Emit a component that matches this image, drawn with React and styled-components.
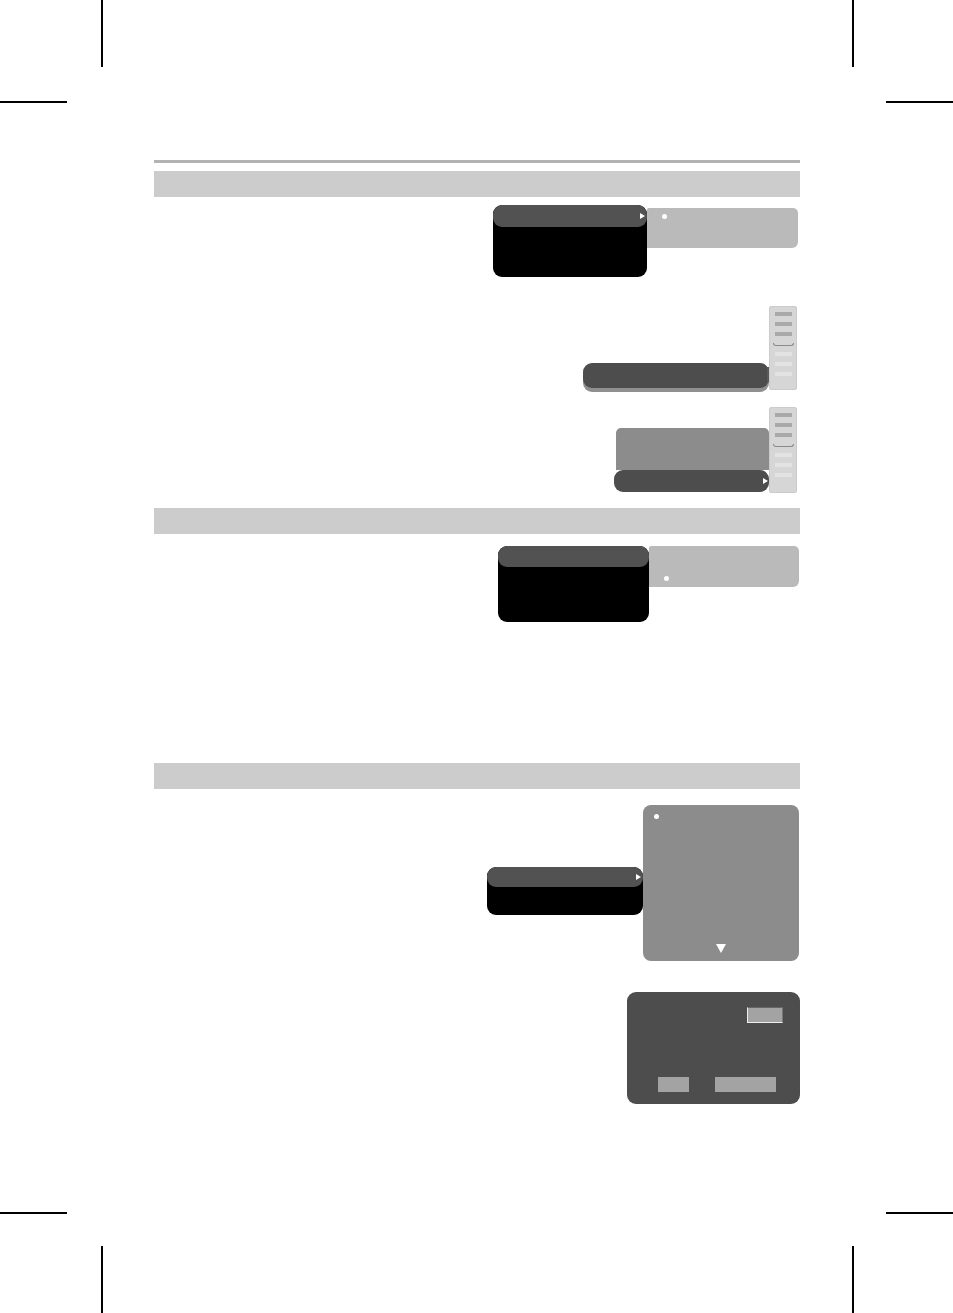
import React from "react";
import styled, { createGlobalStyle } from "styled-components";

// Style
const GlobalStyle = createGlobalStyle`
  html, body {
    margin: 0;
    padding: 0;
    background: #ffffff;
    font-family: "Liberation Sans", Arial, sans-serif;
  }
  * { box-sizing: border-box; }
`;

const Page = styled.div`
  position: relative;
  width: 953px;
  height: 1313px;
  background: #ffffff;
  overflow: hidden;
`;

const CropMark = styled.span`
  position: absolute;
  background: #000000;
  ${({ $vertical }) =>
    $vertical ? `width: 1.5px; height: 67px;` : `width: 67px; height: 1.5px;`}
  ${({ $x }) => `left: ${$x}px;`}
  ${({ $y }) => `top: ${$y}px;`}
`;

const Content = styled.main`
  margin-left: 154px;
  width: 646px;
  padding-top: 160px;
`;

const Rule = styled.div`
  height: 3px;
  background: #b3b3b3;
  margin-bottom: 8px;
`;

const SectionBar = styled.div`
  height: 26px;
  background: #cccccc;
`;

const SectionBody = styled.section`
  height: ${({ $height }) => ($height ? `${$height}px` : "auto")};
  padding-top: ${({ $pad }) => $pad}px;
  display: flex;
  flex-direction: column;
  align-items: flex-end;
`;

const Figure = styled.div`
  display: flex;
  align-items: flex-start;
  margin-top: ${({ $top }) => $top || 0}px;
  margin-right: ${({ $right }) => $right || 0}px;
`;

const Menu = styled.div`
  width: ${({ $w }) => $w}px;
  height: ${({ $h }) => $h}px;
  margin-top: ${({ $top }) => $top || 0}px;
  background: #000000;
  border-radius: 9px;
  overflow: hidden;
`;

const MenuHeader = styled.div`
  height: ${({ $h }) => $h}px;
  background: #525252;
  border-radius: 9px;
  display: flex;
  align-items: center;
  justify-content: flex-end;
  padding-right: 2px;
`;

const Arrow = styled.span`
  width: 0;
  height: 0;
  border-top: 3.5px solid transparent;
  border-bottom: 3.5px solid transparent;
  border-left: 5px solid #ffffff;
`;

const SubMenu = styled.div`
  width: ${({ $w }) => $w}px;
  height: ${({ $h }) => $h}px;
  margin-top: ${({ $top }) => $top || 0}px;
  background: #bababa;
  border-radius: 2px 5px 6px 0;
  display: flex;
  padding-left: 15px;
  padding-top: ${({ $dotTop }) => $dotTop}px;
`;

const Dot = styled.span`
  width: 5px;
  height: 5px;
  border-radius: 50%;
  background: #ffffff;
`;

const Bar = styled.div`
  position: relative;
  width: ${({ $w }) => $w}px;
  height: ${({ $h }) => $h}px;
  margin-top: ${({ $top }) => $top || 0}px;
  background: #4d4d4d;
  border-radius: 9px;
  display: flex;
  align-items: center;
  justify-content: flex-end;
  padding-right: 1px;
  ${({ $shadow }) =>
    $shadow &&
    `
    box-shadow: 0 4px 0 #8f8f8f;
    &::after {
      content: "";
      position: absolute;
      right: -3px;
      top: 4px;
      width: 5px;
      height: 15px;
      background: #5a5a5a;
    }
  `}
`;

const Stack = styled.div`
  display: flex;
  flex-direction: column;
  align-items: flex-end;
  margin-top: ${({ $top }) => $top}px;
`;

const GrayBox = styled.div`
  width: 153px;
  height: 42px;
  background: #8c8c8c;
  border-radius: 5px 5px 0 0;
`;

const Scroll = styled.div`
  position: relative;
  z-index: 1;
  width: 28px;
  height: ${({ $h }) => $h}px;
  background: #d6d6d6;
  border: 1px solid #cbcbcb;
  border-radius: 2px;
  display: flex;
  flex-direction: column;
  align-items: center;
  padding-top: 5px;
  gap: 6px;
`;

const Line = styled.span`
  width: 17px;
  height: 4px;
  background: ${({ $light }) => ($light ? "#e3e3e3" : "#a9a9a9")};
`;

const Arc = styled.span`
  width: 21px;
  height: 3px;
  border: 1px solid #8a8a8a;
  border-top: none;
  border-radius: 0 0 4px 4px;
  margin-top: 1px;
`;

const Panel = styled.div`
  width: 156px;
  height: 156px;
  background: #8c8c8c;
  border-radius: 8px;
  display: flex;
  flex-direction: column;
  justify-content: space-between;
  align-items: flex-start;
  padding: 9px 0 8px 11px;
`;

const DownArrow = styled.span`
  align-self: center;
  margin-left: -11px;
  width: 0;
  height: 0;
  border-left: 5px solid transparent;
  border-right: 5px solid transparent;
  border-top: 9px solid #ffffff;
`;

const Dialog = styled.div`
  width: 173px;
  height: 112px;
  margin-top: ${({ $top }) => $top}px;
  background: #4d4d4d;
  border-radius: 9px;
  display: flex;
  flex-direction: column;
  padding: 15px 17px 0 31px;
`;

const Field = styled.div`
  align-self: flex-end;
  width: 36px;
  height: 16px;
  background: #a3a3a3;
  border-top: 1px solid #666666;
  border-right: 1px solid #777777;
  border-left: 1.5px solid #eeeeee;
  border-bottom: 1.5px solid #eeeeee;
`;

const ButtonRow = styled.div`
  display: flex;
  gap: 26px;
  margin-top: 54px;
`;

const Button = styled.div`
  width: ${({ $w }) => $w}px;
  height: 15px;
  background: #a3a3a3;
`;

const ScrollBar = ({ height }) => (
  <Scroll $h={height}>
    <Line />
    <Line />
    <Line />
    <Arc />
    <Line $light />
    <Line $light />
    <Line $light />
  </Scroll>
);

// React
function App() {
  return (
    <Page>
      <GlobalStyle />
      <CropMark $vertical $x={101} $y={0} />
      <CropMark $x={0} $y={101} />
      <CropMark $vertical $x={852} $y={0} />
      <CropMark $x={886} $y={101} />
      <CropMark $x={0} $y={1212} />
      <CropMark $vertical $x={101} $y={1246} />
      <CropMark $x={886} $y={1212} />
      <CropMark $vertical $x={852} $y={1246} />

      <Content>
        <Rule />
        <SectionBar />
        <SectionBody $height={311} $pad={8}>
          <Figure $right={2}>
            <Menu $w={154} $h={72}>
              <MenuHeader $h={22}>
                <Arrow />
              </MenuHeader>
            </Menu>
            <SubMenu $w={151} $h={40} $top={3} $dotTop={6}>
              <Dot />
            </SubMenu>
          </Figure>

          <Figure $top={29} $right={3}>
            <Bar $w={186} $h={25} $top={57} $shadow />
            <ScrollBar height={84} />
          </Figure>

          <Figure $top={17} $right={3}>
            <Stack $top={21}>
              <GrayBox />
              <Bar $w={155} $h={22}>
                <Arrow />
              </Bar>
            </Stack>
            <ScrollBar height={86} />
          </Figure>
        </SectionBody>

        <SectionBar />
        <SectionBody $height={229} $pad={12}>
          <Figure $right={1}>
            <Menu $w={151} $h={76}>
              <MenuHeader $h={21} />
            </Menu>
            <SubMenu $w={150} $h={41} $dotTop={30}>
              <Dot />
            </SubMenu>
          </Figure>
        </SectionBody>

        <SectionBar />
        <SectionBody $pad={16}>
          <Figure $right={1}>
            <Menu $w={156} $h={48} $top={62}>
              <MenuHeader $h={20}>
                <Arrow />
              </MenuHeader>
            </Menu>
            <Panel>
              <Dot />
              <DownArrow />
            </Panel>
          </Figure>

          <Dialog $top={31}>
            <Field />
            <ButtonRow>
              <Button $w={31} />
              <Button $w={61} />
            </ButtonRow>
          </Dialog>
        </SectionBody>
      </Content>
    </Page>
  );
}

export default App;
